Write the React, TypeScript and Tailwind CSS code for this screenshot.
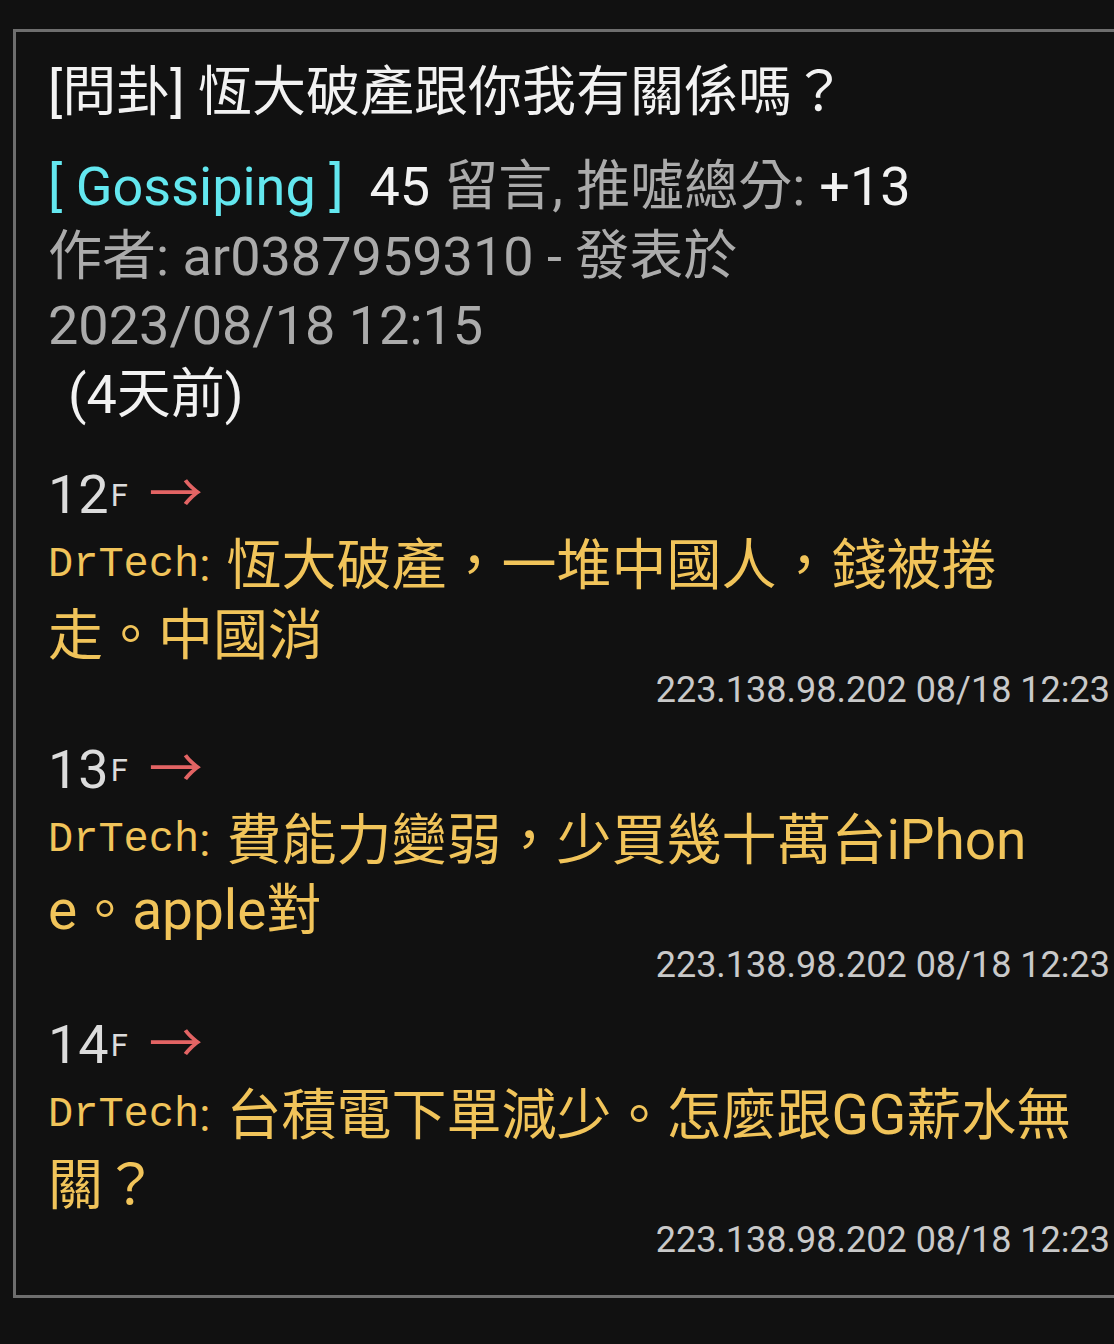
const sans = "font-['Roboto','Noto_Sans_CJK_TC',sans-serif]";

type Floor = {
  no: number;
  user: string;
  lines: string[];
  ip: string;
};

const floors: Floor[] = [
  {
    no: 12,
    user: "DrTech",
    lines: ["恆大破產，一堆中國人，錢被捲", "走。中國消"],
    ip: "223.138.98.202 08/18 12:23",
  },
  {
    no: 13,
    user: "DrTech",
    lines: ["費能力變弱，少買幾十萬台iPhon", "e。apple對"],
    ip: "223.138.98.202 08/18 12:23",
  },
  {
    no: 14,
    user: "DrTech",
    lines: ["台積電下單減少。怎麼跟GG薪水無", "關？"],
    ip: "223.138.98.202 08/18 12:23",
  },
];

function FloorBlock({ floor }: { floor: Floor }) {
  return (
    <div className="mb-[25px]">
      <div className="h-[70px] flex items-center">
        <span className="text-[54px] leading-none text-[#dcdcdc]">{floor.no}</span>
        <span className="text-[31px] leading-none text-[#dcdcdc] self-end mb-[19px] ml-[2px]">F</span>
        <span className="ml-[21px] text-[54px] leading-none text-[#e36464]">→</span>
      </div>
      <div className="text-[#f1c45a] whitespace-nowrap">
        <div className="h-[70px] flex items-center">
          <span className="font-['Liberation_Mono',monospace] text-[42px] leading-none">
            {floor.user}
          </span>
          <span className="text-[46px] leading-none mr-[16px]">:</span>
          <span className="text-[55px] leading-none">{floor.lines[0]}</span>
        </div>
        <div className="h-[70px] flex items-center text-[55px] leading-none">
          {floor.lines[1]}
        </div>
      </div>
      <div className="h-[40px] flex items-center justify-end text-[36px] leading-none text-[#c9c9c9]">
        {floor.ip}
      </div>
    </div>
  );
}

export default function App() {
  return (
    <div className={`w-[1114px] min-h-[1344px] bg-[#111111] overflow-hidden pt-[29px] ${sans}`}>
      <div className="ml-[13px] w-[1104px] border-[3px] border-[#6e6e6e] pl-[32px] pr-[4px] pt-[26px] pb-[10px]">
        <div className="h-[70px] flex items-center text-[54px] leading-none text-[#f2f2f2] whitespace-nowrap">
          [問卦] 恆大破產跟你我有關係嗎？
        </div>
        <div className="mt-[24px] text-[54px] leading-none whitespace-nowrap">
          <div className="h-[70px] flex items-center">
            <span className="text-[#63e7ef]">[ Gossiping ]</span>
            <span className="ml-[26px] text-[#f2f2f2]">45</span>
            <span className="ml-[14px] text-[#ababab]">留言, 推噓總分:</span>
            <span className="ml-[14px] text-[#f2f2f2]">+13</span>
          </div>
          <div className="h-[70px] flex items-center text-[#ababab]">
            作者: ar0387959310 - 發表於
          </div>
          <div className="h-[68px] flex items-center text-[#ababab]">
            2023/08/18 12:15
          </div>
          <div className="h-[70px] flex items-center pl-[20px] text-[#f2f2f2]">
            (4天前)
          </div>
        </div>
        <div className="mt-[30px]">
          {floors.map((f) => (
            <FloorBlock key={f.no} floor={f} />
          ))}
        </div>
      </div>
    </div>
  );
}
